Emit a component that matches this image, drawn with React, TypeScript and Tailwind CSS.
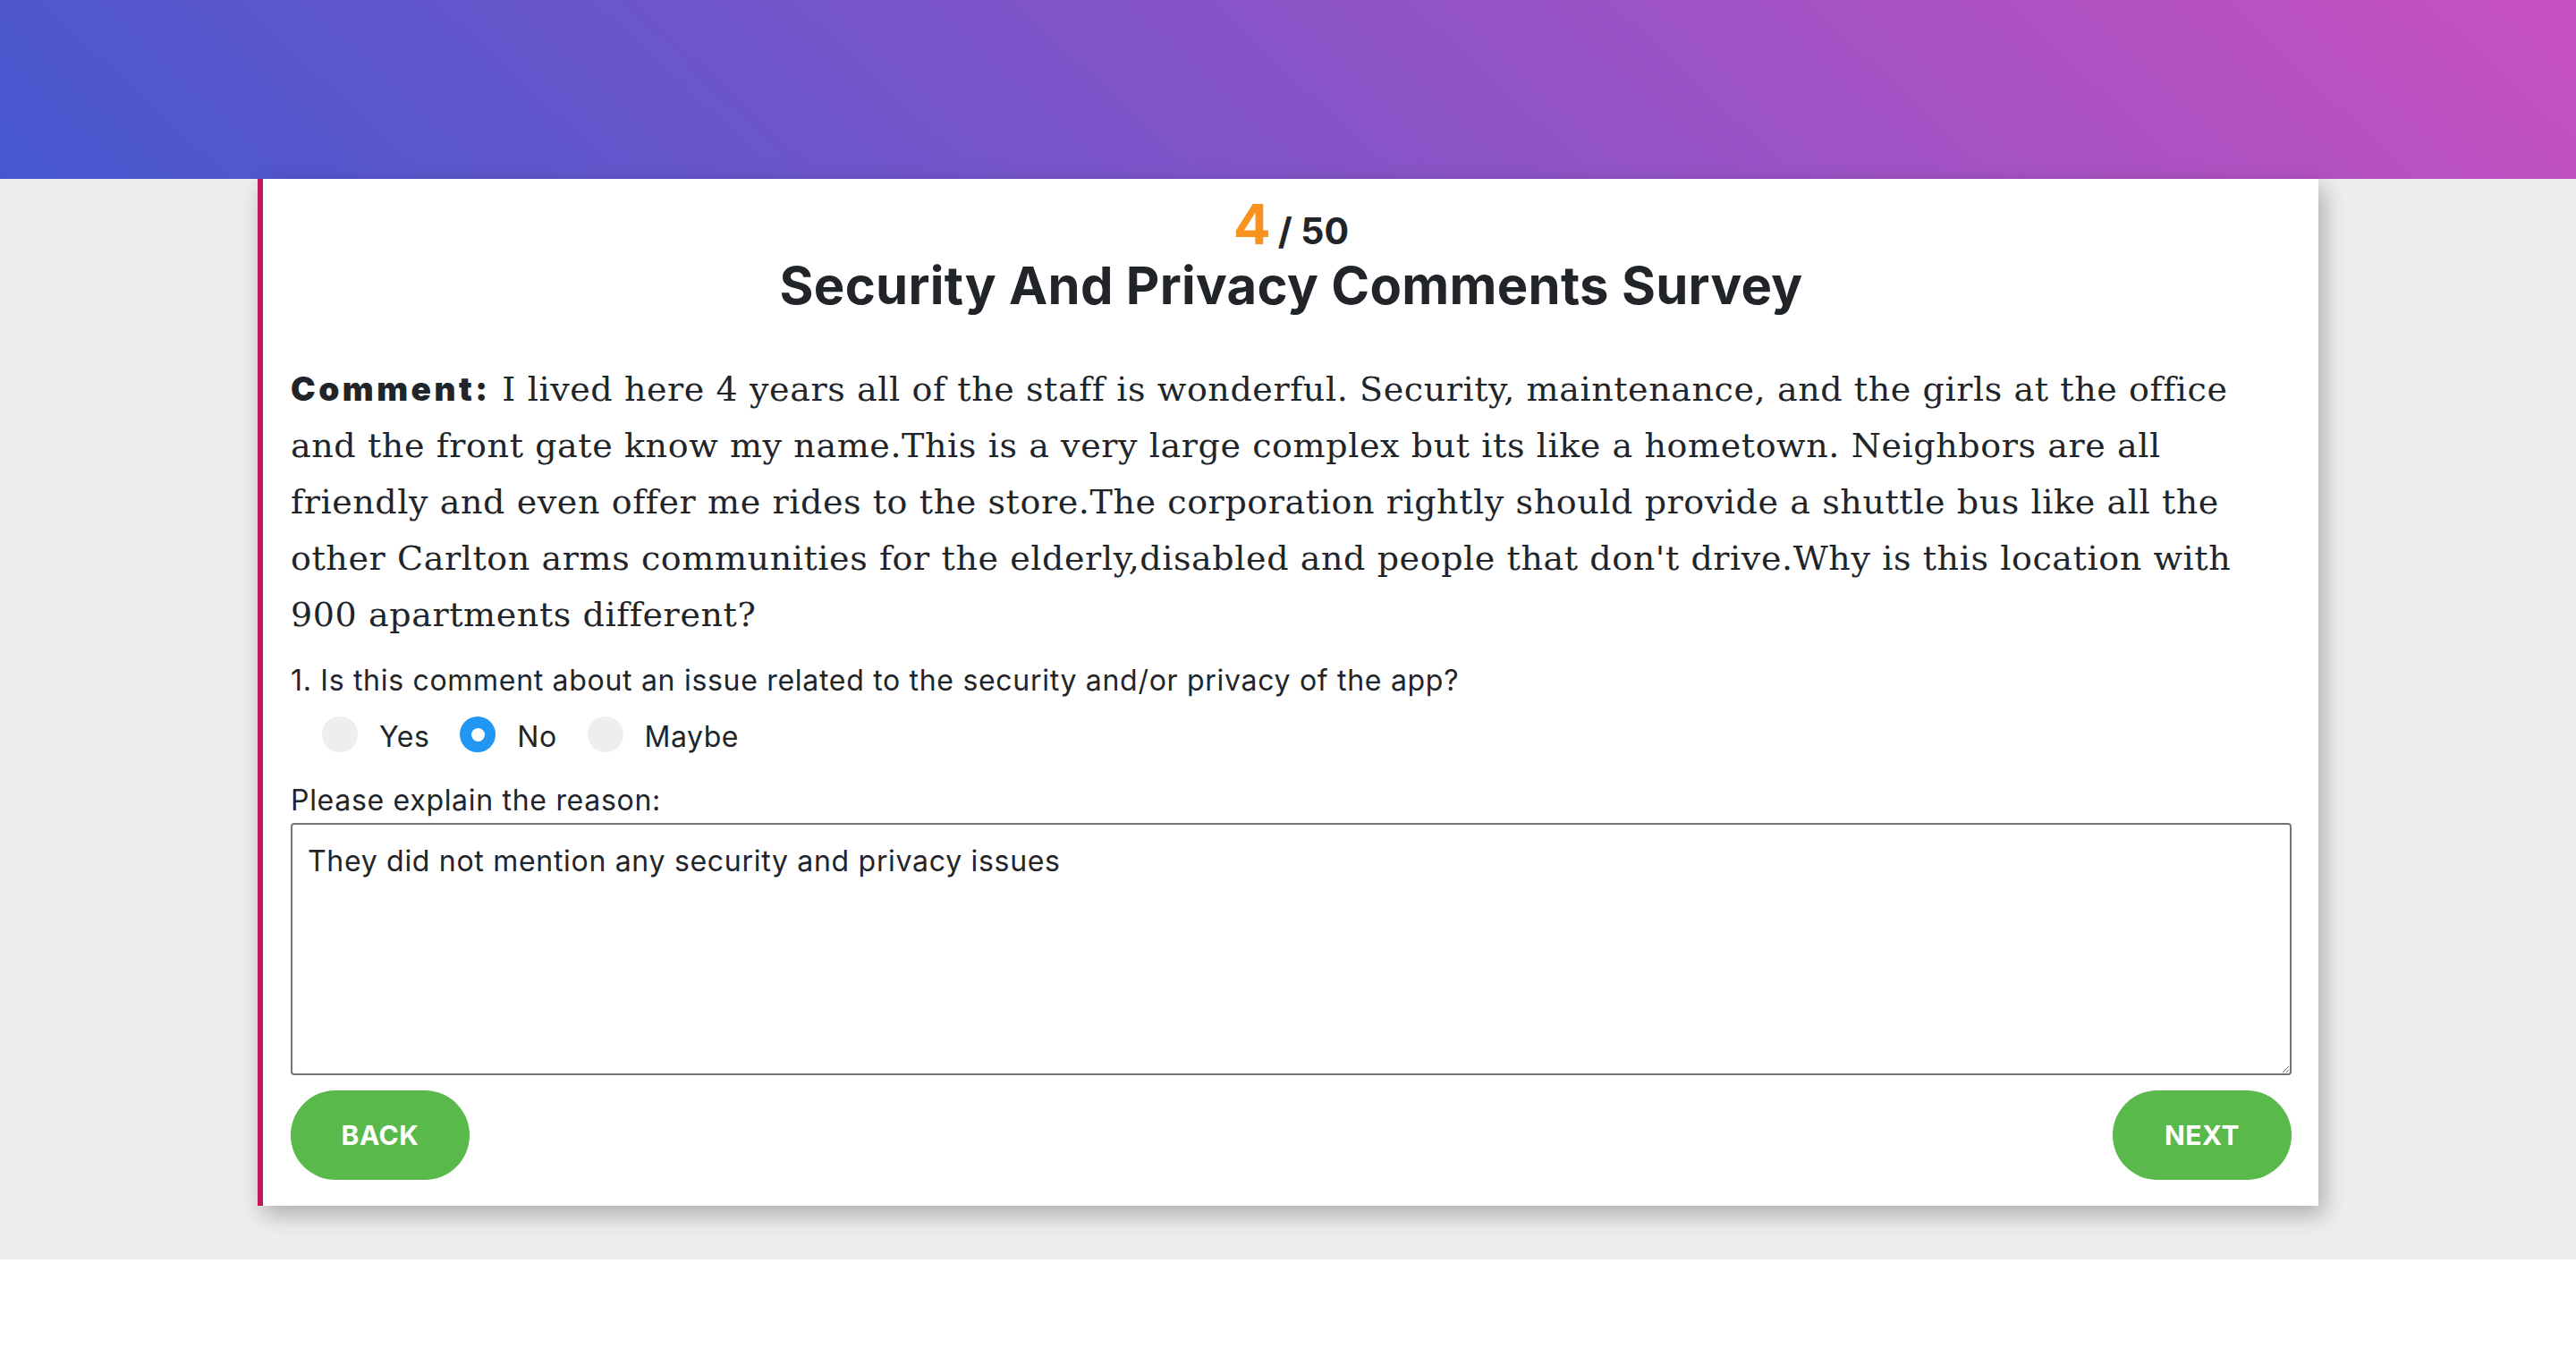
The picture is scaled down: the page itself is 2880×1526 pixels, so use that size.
import React from "react";

const sans = "font-['Inter','Noto_Sans',sans-serif]";

function Radio({ label, checked }: { label: string; checked?: boolean }) {
  return (
    <label className="flex items-center mr-[34px]">
      {checked ? (
        <span className="w-[40px] h-[40px] rounded-full bg-[#2196f3] flex items-center justify-center">
          <span className="w-[15px] h-[15px] rounded-full bg-white" />
        </span>
      ) : (
        <span className="w-[40px] h-[40px] rounded-full bg-[#eeeeee]" />
      )}
      <span className="ml-[24px] pt-[6px] text-[32px] leading-[40px] tracking-[0.5px] text-[#212529]">{label}</span>
    </label>
  );
}

export default function App() {
  return (
    <div className={`${sans} bg-white min-h-[1526px]`}>
      <div className="h-[300px] bg-[linear-gradient(43deg,#4158D0_0%,#C850C0_100%)]" />
      <div className="bg-[#eeeeee] pb-[60px]">
        <div className="w-4/5 mx-auto -mt-[100px] relative bg-white border-l-[6px] border-[#c2185b] shadow-[6px_10px_24px_rgba(0,0,0,0.28)] pl-[31px] pr-[30px] pt-[20px] pb-[29px] text-[#212529]">
          <div className="flex items-baseline justify-center leading-none h-[62px]">
            <span className="text-[62px] font-bold text-[#f7931e] leading-none">4</span>
            <span className="text-[41px] font-bold ml-[8px] leading-none">/ 50</span>
          </div>
          <h1 className="mt-[4px] text-center text-[58px] font-bold leading-[67px] tracking-[0.3px]">
            Security And Privacy Comments Survey
          </h1>
          <p className="mt-[50px] text-[38px] leading-[63px] font-['DejaVu_Serif',serif] tracking-[0.6px]">
            <span className="font-['Inter','Noto_Sans',sans-serif] font-black text-[37px] tracking-[3.5px]">Comment:</span>{" "}
            I lived here 4 years all of the staff is wonderful. Security, maintenance, and the girls at the office
            <br />
            and the front gate know my name.This is a very large complex but its like a hometown. Neighbors are all
            <br />
            friendly and even offer me rides to the store.The corporation rightly should provide a shuttle bus like all the
            <br />
            other Carlton arms communities for the elderly,disabled and people that don't drive.Why is this location with
            <br />
            900 apartments different?
          </p>
          <div className="mt-[18px] text-[32px] leading-[48px] tracking-[0.7px]">
            1. Is this comment about an issue related to the security and/or privacy of the app?
          </div>
          <div className="mt-[13px] ml-[35px] flex items-center">
            <Radio label="Yes" />
            <Radio label="No" checked />
            <Radio label="Maybe" />
          </div>
          <div className="mt-[27px] text-[32px] leading-[48px] tracking-[0.7px]">Please explain the reason:</div>
          <textarea
            className="mt-[1px] block w-full h-[282px] border-2 border-[#767676] rounded-[4px] p-[17px] text-[32px] leading-[48px] tracking-[0.7px] text-[#212529] outline-none resize-y"
            defaultValue="They did not mention any security and privacy issues"
          />
          <div className="mt-[17px] flex justify-between">
            <button className="w-[200px] h-[100px] rounded-full bg-[#59b94a] text-white text-[30px] font-bold tracking-[0.5px]">
              BACK
            </button>
            <button className="w-[200px] h-[100px] rounded-full bg-[#59b94a] text-white text-[30px] font-bold tracking-[0.5px]">
              NEXT
            </button>
          </div>
        </div>
      </div>
    </div>
  );
}
